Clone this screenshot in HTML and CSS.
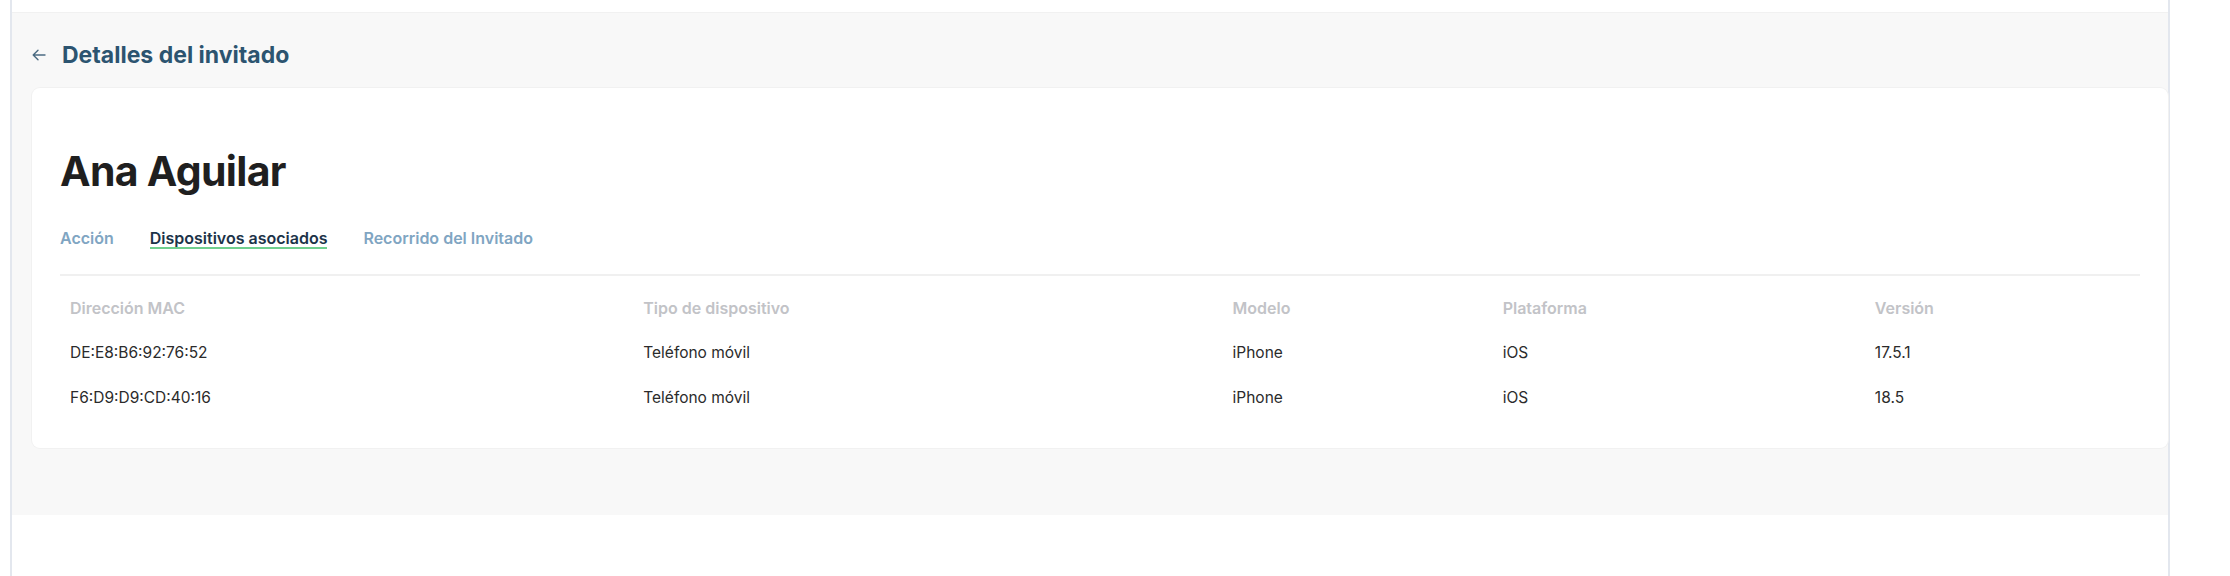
FILE: index.html
```html
<!DOCTYPE html>
<html lang="es">
<head>
  <meta charset="UTF-8">
  <meta name="viewport" content="width=device-width, initial-scale=1.0">
  <title>Detalles del invitado</title>
  <link rel="stylesheet" href="styles.css">
</head>
<body>
  <div class="frame">
    <main class="panel">
      <div class="page-head">
        <button class="back" aria-label="Volver">
          <svg width="14" height="12" viewBox="0 0 14 12" fill="none" stroke="currentColor" stroke-width="1.4" stroke-linecap="round" stroke-linejoin="round">
            <path d="M13 6H1.5M6 1.2L1.2 6 6 10.8"/>
          </svg>
        </button>
        <h2>Detalles del invitado</h2>
      </div>

      <section class="card">
        <h1>Ana Aguilar</h1>
        <nav class="tabs">
          <a href="#">Acción</a>
          <a href="#" class="active">Dispositivos asociados</a>
          <a href="#">Recorrido del Invitado</a>
        </nav>
        <div class="divider"></div>

        <table class="devices">
          <colgroup>
            <col class="col-mac">
            <col class="col-type">
            <col class="col-model">
            <col class="col-platform">
            <col class="col-version">
          </colgroup>
          <thead>
            <tr>
              <th>Dirección MAC</th>
              <th>Tipo de dispositivo</th>
              <th>Modelo</th>
              <th>Plataforma</th>
              <th>Versión</th>
            </tr>
          </thead>
          <tbody>
            <tr>
              <td>DE:E8:B6:92:76:52</td>
              <td>Teléfono móvil</td>
              <td>iPhone</td>
              <td>iOS</td>
              <td>17.5.1</td>
            </tr>
            <tr>
              <td>F6:D9:D9:CD:40:16</td>
              <td>Teléfono móvil</td>
              <td>iPhone</td>
              <td>iOS</td>
              <td>18.5</td>
            </tr>
          </tbody>
        </table>
      </section>
    </main>
  </div>
</body>
</html>
```

FILE: styles.css
```css
body {
  margin: 0;
  background-color: #ffffff;
  font-family: 'Inter', 'Noto Sans', sans-serif;
}
.frame {
  margin-left: 10px;
  width: 2156px;
  height: 576px;
  border-left: 2px solid #e3e7ee;
  border-right: 2px solid #e3e7ee;
  padding-top: 12px;
  box-sizing: content-box;
}
.panel {
  background-color: #f8f8f8;
  border-top: 1px solid #f1f1f1;
  padding: 28px 0 67px 20px;
}
.page-head {
  display: flex;
  align-items: center;
  height: 28px;
  margin-bottom: 19px;
}
.back {
  background: none;
  border: none;
  padding: 0;
  margin-right: 16px;
  color: #4b6b82;
  display: flex;
  cursor: pointer;
}
.page-head h2 {
  margin: 0;
  font-size: 23px;
  line-height: 28px;
  font-weight: 700;
  color: #2c5470;
}
.card {
  background-color: #ffffff;
  border-radius: 8px;
  box-shadow: 0 0 0 1px #f1f1f1;
  padding: 57px 28px 28px 28px;
}
.card h1 {
  margin: 0;
  font-size: 41px;
  line-height: 52px;
  font-weight: 700;
  color: #1f1f1f;
  letter-spacing: -0.7px;
}
.tabs {
  display: flex;
  gap: 36px;
  margin-top: 32px;
}
.tabs a {
  font-size: 16px;
  line-height: 18px;
  font-weight: 600;
  color: #80a5c2;
  text-decoration: none;
  border-bottom: 2px solid transparent;
}
.tabs a.active {
  color: #1c3349;
  border-bottom-color: #6fcf8e;
}
.divider {
  height: 2px;
  background-color: #f0f0f0;
  margin-top: 25px;
  margin-bottom: 9px;
}
.devices {
  width: 100%;
  border-collapse: collapse;
  table-layout: fixed;
}
.col-mac { width: 573px; }
.col-type { width: 589px; }
.col-model { width: 270px; }
.col-platform { width: 372px; }
.col-version { width: 275px; }
th, td {
  text-align: left;
  padding: 0 10px;
  height: 45px;
}
th {
  font-size: 16px;
  font-weight: 600;
  color: #c2c3c7;
}
td {
  font-size: 15.5px;
  font-weight: 400;
  color: #2b2b2b;
}
```
